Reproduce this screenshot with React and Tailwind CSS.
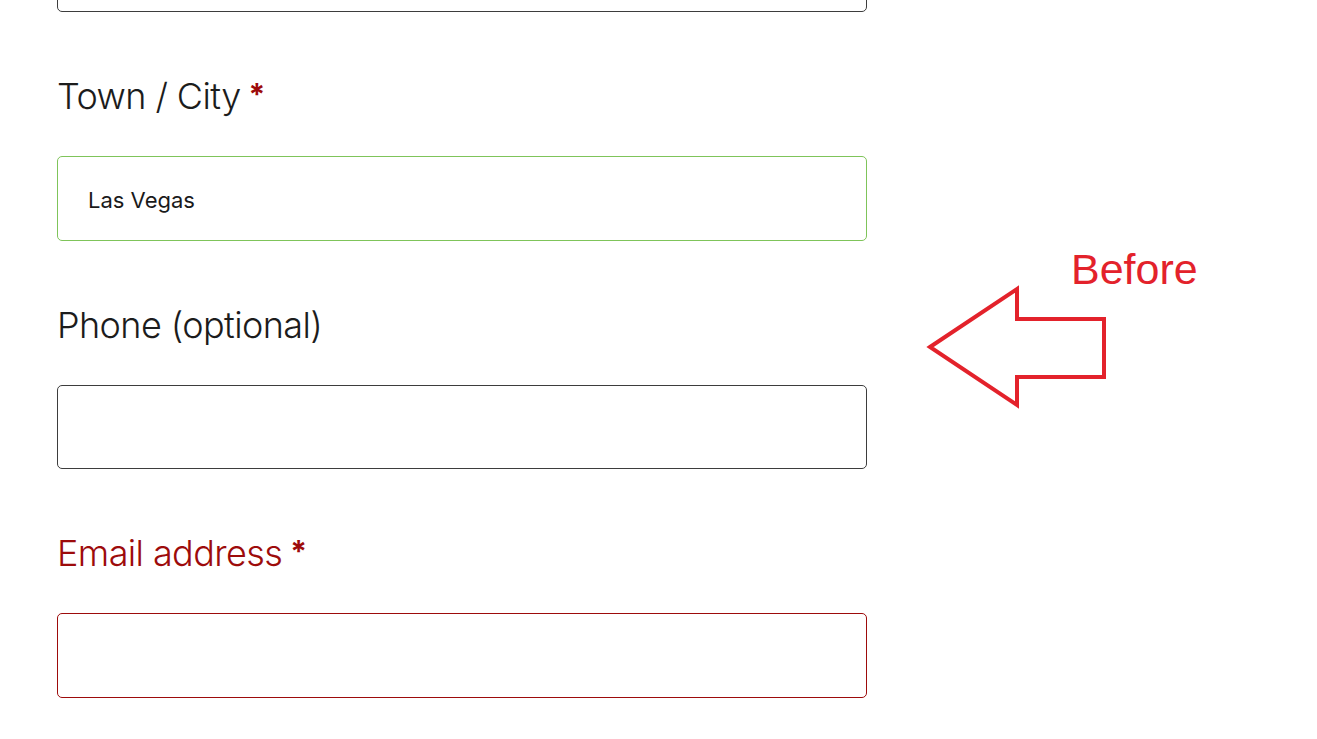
import React from "react";

const fields = [
  { label: "Town / City", required: true, value: "Las Vegas", state: "valid" },
  { label: "Phone (optional)", required: false, value: "", state: "idle" },
  { label: "Email address", required: true, value: "", state: "error" },
];

const borderFor = {
  idle: "border-[#3d3d3d]",
  valid: "border-[#7fc45a]",
  error: "border-[#9d0b0b]",
};

const Field = ({ label, required, value, state }) => (
  <div className="flex flex-col">
    <label
      className={`mt-[60px] mb-[36px] h-[48px] leading-[48px] text-[36px] font-light tracking-[-0.6px] ${
        state === "error" ? "text-[#9d0b0b]" : "text-[#1c1c1c]"
      }`}
    >
      {label}
      {required && (
        <span className="ml-[8px] text-[30px] font-bold text-[#9d0b0b] relative top-[-4px]">
          *
        </span>
      )}
    </label>
    <input
      type="text"
      defaultValue={value}
      className={`h-[84.5px] w-full rounded-[5px] border bg-white px-[30px] pt-[4px] text-[22px] text-[#1a1a1a] outline-none ${borderFor[state]}`}
    />
  </div>
);

const App = () => {
  return (
    <div
      className="relative min-h-[739px] w-full overflow-hidden bg-white"
      style={{ fontFamily: "Inter, 'Noto Sans', sans-serif" }}
    >
      <form className="w-[810px] ml-[57px] mt-[-72.5px] flex flex-col">
        {/* previous field, mostly scrolled away */}
        <input
          type="text"
          className="h-[84.5px] w-full rounded-[5px] border border-[#3d3d3d] bg-white outline-none"
        />
        {fields.map((f) => (
          <Field key={f.label} {...f} />
        ))}
      </form>

      {/* annotation */}
      <div className="absolute left-[1071px] top-[243px] text-[43px] leading-[52px] text-[#e3222b] font-['Liberation_Sans',Arial,sans-serif]">
        Before
      </div>
      <svg
        className="absolute left-[920px] top-[280px]"
        width="200"
        height="135"
        viewBox="920 280 200 135"
      >
        <polygon
          points="930,347 1017,289 1017,319 1104,319 1104,377 1017,377 1017,405"
          fill="none"
          stroke="#e3222b"
          strokeWidth="4"
          strokeLinejoin="miter"
        />
      </svg>
    </div>
  );
};

export default App;
